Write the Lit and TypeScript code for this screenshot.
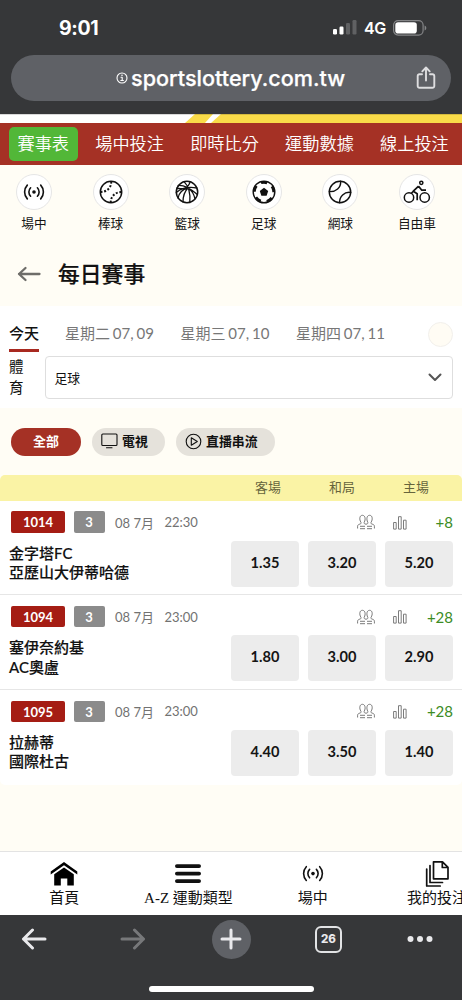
import { LitElement, html, css, svg } from 'lit';
import { customElement, property } from 'lit/decorators.js';

const broadcast = svg`
  <circle cx="12" cy="12" r="1.8" fill="currentColor" stroke="none"/>
  <path d="M8.6 7.800a6 6 0 0 0 0 8.400M15.400 7.800a6 6 0 0 1 0 8.400M5.300 5.100a10.200 10.200 0 0 0 0 13.800M18.700 5.100a10.200 10.200 0 0 1 0 13.800" stroke-width="1.600"/>`;

const sportIcons: Record<string, unknown> = {
  live: broadcast,
  baseball: svg`
    <circle cx="12" cy="12" r="10.700" stroke-width="1.500"/>
    <path d="M12.200 1.600c.4 5.600-4.200 10.600-10.600 10.300M22.400 12.100c-6-.3-11 4.700-10.600 10.300" stroke-width="2" stroke-linecap="butt" stroke-dasharray="2 1.700"/>`,
  basketball: svg`
    <circle cx="12" cy="12" r="10.700" stroke-width="1.500"/>
    <path d="M1.300 12.600C7 7.600 15 6.800 21.800 8M3.200 5.400c6.600-.4 13.600 4.200 19.200 9.200M9 1.600c4.600 4.400 6.600 12 5.800 21M15.200 1.700c-1.500 6-7.200 8-13.500 6.500M3 18c1.500-6 6-9 9.500-9.800M8 22c0-6 2-11 5-14M20 19c-1-5-3-8.500-7-11" stroke-width="1.300"/>`,
  soccer: svg`
    <circle cx="12" cy="12" r="10.800" stroke-width="1.400"/>
    <circle cx="12" cy="12" r="9.700" stroke-width="2.800" stroke-linecap="butt" stroke-dasharray="6.200 5.990" transform="rotate(-108 12 12)"/>
    <path fill="currentColor" stroke="none" d="M12 7.800l4.200 3.100-1.600 4.900H9.400l-1.600-4.900z"/>`,
  tennis: svg`
    <circle cx="12" cy="12" r="10.700" stroke-width="1.500"/>
    <path d="M12.600 1.200c.6 6.400-4.800 10.800-11.300 10.400M22.700 12.400c-6.400-.8-11.400 4-11.100 10.400" stroke-width="1.400"/>`,
};

@customElement('sport-item')
class SportItem extends LitElement {
  @property() name = '';
  @property() icon = '';
  static styles = css`
    :host { display: flex; flex-direction: column; align-items: center; width: 76.6px; flex: none; }
    .ring { width: 36px; height: 36px; box-sizing: border-box; border: 1px solid #e6e6e6; border-radius: 50%; background: #fff; display: grid; place-items: center; }
    svg { fill: none; stroke: currentColor; stroke-linejoin: round; display: block; }
    span { margin-top: 3px; font-size: 12.7px; line-height: 20px; color: #151515; }
  `;
  render() {
    return html`
      <div class="ring">
        ${this.icon === 'bike'
          ? html`<svg width="28" height="24" viewBox="0 0 28 24">
              <g stroke="currentColor" stroke-width="1.500">
                <circle cx="6" cy="17.500" r="4.700"/><circle cx="21.700" cy="17.500" r="4.700"/>
                <circle cx="18.300" cy="2.800" r="1.600"/>
                <path d="M15.600 6.200l-5.300 5 3.900 2.500v6.500M15.600 6.200l3.200 4h4.200M10.300 11.200l-2.300 2.600" stroke-width="1.700"/>
              </g></svg>`
          : html`<svg width="24" height="24" viewBox="0 0 24 24" stroke-linecap="round">${sportIcons[this.icon]}</svg>`}
      </div>
      <span>${this.name}</span>`;
  }
}

@customElement('match-row')
class MatchRow extends LitElement {
  @property() code = '';
  @property() time = '';
  @property() more = '';
  @property({ attribute: false }) teams: string[] = [];
  @property({ attribute: false }) odds: string[] = [];
  static styles = css`
    :host { display: flex; justify-content: space-between; box-sizing: border-box; height: 94.700px; padding: 10.500px 9px 0 9px; background: #fff; border-bottom: 1.300px solid #e6e6e6; }
    .meta { display: flex; align-items: center; height: 22px; font-size: 13px; color: #727272; padding-left: 2px; white-space: nowrap; }
    .badge { height: 21.500px; line-height: 22px; border-radius: 2px; color: #fff; text-align: center; font-size: 13px; font-weight: 700; }
    .code { width: 54px; background: #a51d14; margin-right: 8.500px; }
    .num { width: 31px; background: #8b8b8b; margin-right: 10.500px; }
    .day { width: 49.500px; }
    .team { font-size: 15px; line-height: 19.500px; font-weight: 500; color: #111; -webkit-text-stroke: .15px #111; white-space: nowrap; }
    .teams { padding-top: 10.500px; }
    .right { width: 222px; }
    .tools { height: 22px; display: flex; justify-content: flex-end; align-items: center; color: #7b7b7b; }
    .people { margin-right: 18.500px; }
    .more { width: 46px; text-align: right; color: #3c8c25; font-size: 15px; line-height: 22px; }
    .odds { display: flex; gap: 9px; margin-top: 7.500px; }
    .odd { width: 68px; height: 46px; border-radius: 4px; background: #ececec; text-align: center; line-height: 44.500px; font-size: 14.600px; font-weight: 700; color: #151515; }
    svg { fill: none; stroke: currentColor; display: block; }
  `;
  render() {
    return html`
      <div>
        <div class="meta">
          <div class="badge code">${this.code}</div><div class="badge num">3</div>
          <span class="day">08 7月</span><span>${this.time}</span>
        </div>
        <div class="teams">${this.teams.map((t) => html`<div class="team">${t}</div>`)}</div>
      </div>
      <div class="right">
        <div class="tools">
          <svg class="people" width="18" height="16" viewBox="0 0 18 16">
            <path d="M.6 14.500v-2.300c0-1.300 1-1.700 2.700-2.300 1-.3 1-1.100.5-1.800C2.200 5.500 2.400 1.300 5.400 1.300S8.700 5.500 7.300 8.100c-.4.8-.3 1.400.5 1.700l1.200.5 1.200-.5c.8-.3.900-.9.500-1.700C9.300 5.500 9.600 1.300 12.600 1.300s3.200 4.200 1.600 6.800c-.5.7-.5 1.500.5 1.800 1.700.6 2.700 1 2.700 2.300v2.300M3 12.300h5M10 12.300h5M3 14.700h5M10 14.700h5"/>
          </svg>
          <svg width="14" height="15" viewBox="0 0 14 15">
            <path d="M.6 7.500h2.600v6.600H.6zM5.500 1.700h2.700v12.400H5.500zM10.500 5.200h2.600v8.900h-2.600z"/>
          </svg>
          <span class="more">${this.more}</span>
        </div>
        <div class="odds">${this.odds.map((o) => html`<div class="odd">${o}</div>`)}</div>
      </div>`;
  }
}

@customElement('app-root')
class AppRoot extends LitElement {
  static styles = css`
    :host { display: flex; flex-direction: column; width: 462px; height: 1000px; overflow: hidden; background: #fffdf5; font-family: Lato, "Noto Sans CJK TC", sans-serif; color: #111; }
    svg { display: block; fill: none; stroke: currentColor; stroke-linecap: round; stroke-linejoin: round; }
    .chrome { height: 114px; flex: none; background: #363739; color: #fff; font-family: Inter, sans-serif; }
    .status { height: 55px; box-sizing: border-box; padding: 0 35px 0 59px; display: flex; align-items: center; }
    .clock { font-size: 19.500px; font-weight: 700; letter-spacing: -.35px; flex: 1; }
    .net { font-size: 16px; font-weight: 600; margin: 0 7px 0 7px; letter-spacing: -.3px; }
    .url { margin: 0 11px; height: 46px; border-radius: 23px; background: #5f6166; display: flex; align-items: center; padding: 0 14px 0 105px; }
    .host { font-size: 21.600px; font-weight: 500; margin-left: 3px; flex: 1; white-space: nowrap; letter-spacing: 0; line-height: 44px; -webkit-text-stroke: .25px #fff; }
    .share { color: #dedee0; }
    .banner { height: 9px; flex: none; }
    .nav { height: 42px; flex: none; box-sizing: border-box; background: #a53125; color: #fff; display: flex; align-items: center; padding-left: 8.500px; font-size: 17.200px; font-weight: 350; white-space: nowrap; }
    .nav span { margin-left: 26.200px; line-height: 34px; }
    .nav .current { margin: 0 -9px 0 0; width: 69.500px; height: 34px; border-radius: 5px; background: #52b738; text-align: center; }
    .sports { display: flex; height: 79px; flex: none; box-sizing: border-box; padding-top: 9px; margin-left: -4.300px; }
    .title { height: 61.500px; flex: none; display: flex; align-items: center; box-sizing: border-box; padding: 0 0 2px 17px; }
    .title h1 { font-size: 21.800px; font-weight: 500; margin: 0 0 0 17px; line-height: 32px; -webkit-text-stroke: .2px #111; }
    .title svg { color: #6e6d69; }
    .filter { height: 102.500px; flex: none; background: #fff; box-sizing: border-box; padding: 14px 9px 0; }
    .tabs { display: flex; height: 32.500px; align-items: flex-start; font-size: 15px; line-height: 27px; color: #777; white-space: nowrap; }
    .tabs .today { color: #111; font-weight: 500; height: 32px; box-sizing: border-box; border-bottom: 3.500px solid #a82920; }
    .day { margin-left: 26px; width: 89.500px; font-size: 15px; word-spacing: -1px; }
    .scroll { width: 23px; height: 23px; margin: 2px 0 0 auto; border: 1px solid #f2f0ec; border-radius: 50%; background: #fffcf4; }
    .sport { display: flex; margin-top: 4px; }
    .sport label { width: 14px; margin-right: 22px; font-size: 14.500px; line-height: 21.300px; }
    .select { flex: 1; height: 43px; box-sizing: border-box; border: 1px solid #dedede; border-radius: 4px; display: flex; align-items: center; justify-content: space-between; padding: 0 10px 1px 8.500px; font-size: 12.800px; }
    .select svg { color: #555; }
    .pills { display: flex; gap: 11px; padding: 19.500px 11px 0; height: 66.500px; box-sizing: border-box; flex: none; font-size: 12.900px; font-weight: 700; line-height: 26px; }
    .pill { height: 28px; box-sizing: border-box; border-radius: 14px; background: #e5e2db; display: flex; align-items: center; padding: 0 0 1px 9px; gap: 4px; white-space: nowrap; }
    .all { width: 70px; background: #a53125; color: #fff; padding: 0 0 1px; justify-content: center; }
    .tv { width: 73px; }
    .stream { width: 99px; }
    .head { height: 26px; flex: none; background: #faf3a5; border-radius: 5px 5px 0 0; display: flex; justify-content: flex-end; gap: 9px; padding-right: 13.500px; font-size: 12.900px; line-height: 25px; color: #66643c; }
    .head span { width: 65px; text-align: center; }
    .matches { flex: 1; }
    .matches :last-child { border-bottom-color: transparent; border-radius: 0 0 5px 5px; }
    .bottom { height: 64px; flex: none; box-sizing: border-box; border-top: 1px solid #e3e3e3; background: #fff; display: flex; padding-left: 2px; }
    .bottom div { width: 124.300px; flex: none; display: flex; flex-direction: column; align-items: center; font-family: "Liberation Serif", "Noto Sans CJK TC", serif; font-size: 15px; line-height: 22px; white-space: nowrap; }
    .bottom svg { margin: 8px 0 -1px; flex: none; }
    .browser { height: 85px; flex: none; background: #363739; color: #e9e9ec; }
    .buttons { height: 48px; display: grid; grid-template-columns: 68px 129px 68px 127px 55px; place-items: center; }
    .dim { color: #77787a; }
    .plus { width: 39px; height: 39px; border-radius: 50%; background: #5f6166; display: grid; place-items: center; }
    .count { width: 27px; height: 27px; box-sizing: border-box; border: 2.700px solid #e2e3e5; border-radius: 6px; display: grid; place-items: center; font: 800 11.500px Inter, sans-serif; }
    .bar { width: 165px; height: 6px; border-radius: 3px; background: #fff; margin: 22.500px auto 0; }
  `;

  render() {
    const sports = [['場中', 'live'], ['棒球', 'baseball'], ['籃球', 'basketball'], ['足球', 'soccer'], ['網球', 'tennis'], ['自由車', 'bike']];
    const matches = [
      { code: '1014', time: '22:30', more: '+8', teams: ['金字塔FC', '亞歷山大伊蒂哈德'], odds: ['1.35', '3.20', '5.20'] },
      { code: '1094', time: '23:00', more: '+28', teams: ['塞伊奈約基', 'AC奧盧'], odds: ['1.80', '3.00', '2.90'] },
      { code: '1095', time: '23:00', more: '+28', teams: ['拉赫蒂', '國際杜古'], odds: ['4.40', '3.50', '1.40'] },
    ];
    return html`
      <div class="chrome">
        <div class="status">
          <span class="clock">9:01</span>
          <svg width="24" height="15" viewBox="0 0 24 15">
            <g stroke="none"><rect x="0" y="9" width="4" height="5.500" rx="1.200" fill="#fff"/><rect x="6.500" y="6.500" width="4" height="8" rx="1.200" fill="#fff"/>
            <rect x="13" y="3" width="4" height="11.500" rx="1.200" fill="#606163"/><rect x="19.500" y="0" width="4" height="14.500" rx="1.200" fill="#606163"/></g>
          </svg>
          <span class="net">4G</span>
          <svg width="34" height="16" viewBox="0 0 34 16">
            <rect x=".6" y=".6" width="29.500" height="14.500" rx="4.500" stroke="#848587" stroke-width="1.200"/>
            <rect x="2.300" y="2.300" width="21.500" height="11.200" rx="2.800" fill="#fff" stroke="none"/>
            <path d="M31.600 5.500c2.300 1 2.300 4 0 5z" fill="#848587" stroke="none"/>
          </svg>
        </div>
        <div class="url">
          <svg width="12" height="12" viewBox="0 0 12 12"><circle cx="6" cy="6" r="5" stroke-width="1.100"/><path d="M5 5.200h1.200v3M4.800 8.500h2.600" stroke-width="1.100"/><circle cx="6" cy="3.200" r=".8" fill="#fff" stroke="none"/></svg>
          <span class="host">sportslottery.com.tw</span>
          <svg class="share" width="22" height="24" viewBox="0 0 22 24" stroke-width="1.900"><path d="M7 8.300H4.500A1.800 1.800 0 0 0 2.700 10v10a1.800 1.800 0 0 0 1.800 1.800h13a1.800 1.800 0 0 0 1.800-1.800V10a1.800 1.800 0 0 0-1.800-1.700H15M11 14.500V2M7.300 5.300L11 1.500l3.700 3.800"/></svg>
        </div>
      </div>
      <svg class="banner" width="462" height="9" viewBox="0 0 462 9">
        <g stroke="none"><rect width="462" height="9" fill="#fff"/><path d="M195 0H213L205 9H185z" fill="#f9db49"/><path d="M221 0H462V9H211z" fill="#f9db49"/><rect width="462" height=".8" fill="#00000030"/></g>
      </svg>
      <nav class="nav"><span class="current">賽事表</span>${['場中投注', '即時比分', '運動數據', '線上投注'].map((t) => html`<span>${t}</span>`)}</nav>
      <div class="sports">${sports.map(([n, i]) => html`<sport-item name=${n} icon=${i}></sport-item>`)}</div>
      <div class="title">
        <svg width="24" height="18" viewBox="0 0 24 18" stroke-width="2.300"><path d="M22.500 9H2M8.500 3L2 9l6.500 6"/></svg>
        <h1>每日賽事</h1>
      </div>
      <div class="filter">
        <div class="tabs">
          <span class="today">今天</span>
          <span class="day">星期二 07, 09</span><span class="day">星期三 07, 10</span><span class="day">星期四 07, 11</span>
          <i class="scroll"></i>
        </div>
        <div class="sport">
          <label>體育</label>
          <div class="select">足球<svg width="14" height="9" viewBox="0 0 14 9" stroke-width="2"><path d="M1.500 1.500L7 7l5.500-5.500"/></svg></div>
        </div>
      </div>
      <div class="pills">
        <div class="pill all">全部</div>
        <div class="pill tv"><svg width="17" height="16" viewBox="0 0 17 16" stroke-width="1.100"><rect x=".8" y="1" width="15.200" height="11.500" rx="1"/><path d="M5.500 14.800h5.500"/></svg>電視</div>
        <div class="pill stream"><svg width="17" height="17" viewBox="0 0 17 17" stroke-width="1.100"><circle cx="8.500" cy="8.500" r="7.300"/><path d="M6.300 4.800v7.400l6-3.700z"/></svg>直播串流</div>
      </div>
      <div class="head"><span>客場</span><span>和局</span><span>主場</span></div>
      <div class="matches">
        ${matches.map((m) => html`<match-row code=${m.code} time=${m.time} more=${m.more} .teams=${m.teams} .odds=${m.odds}></match-row>`)}
      </div>
      <nav class="bottom">
        <div><svg width="28" height="28" viewBox="0 0 28 28"><g fill="#000" stroke="none"><path d="M14 2L27.300 11.500v3L14 5.200.7 14.500v-3z"/><path d="M14 7.500l9.800 6.800V25.500h-6.500v-7h-6.500v7H4.200V14.300z"/></g></svg>首頁</div>
        <div><svg width="28" height="28" viewBox="0 0 28 28" stroke-width="3.800"><path d="M2.900 4.700h22.200M2.900 12.200h22.200M2.900 19.700h22.200" transform="translate(0 1.400)"/></svg>A-Z 運動類型</div>
        <div><svg width="28" height="28" viewBox="0 0 28 28"><g transform="translate(2 1.600)">${broadcast}</g></svg>場中</div>
        <div><svg width="28" height="28" viewBox="0 0 28 28" stroke-width="1.700"><path d="M10.500 1.800h9l5.500 5.500v11.500h-14.500zM19.300 2v5.500H25M7 5.500v17h12.500M3.700 9v17h13.500"/></svg>我的投注</div>
      </nav>
      <div class="browser">
        <div class="buttons">
          <svg width="26" height="22" viewBox="0 0 26 22" stroke-width="3"><path d="M24 11H2.500M11.500 2L2.500 11l9 9"/></svg>
          <svg class="dim" width="26" height="22" viewBox="0 0 26 22" stroke-width="3"><path d="M2 11h21.500M14.500 2l9 9-9 9"/></svg>
          <div class="plus"><svg width="22" height="22" viewBox="0 0 22 22" stroke-width="3"><path d="M11 2v18M2 11h18"/></svg></div>
          <div class="count">26</div>
          <svg width="26" height="8" viewBox="0 0 26 8"><g fill="currentColor" stroke="none"><circle cx="3.500" cy="4" r="3"/><circle cx="13" cy="4" r="3"/><circle cx="22.500" cy="4" r="3"/></g></svg>
        </div>
        <div class="bar"></div>
      </div>`;
  }
}
